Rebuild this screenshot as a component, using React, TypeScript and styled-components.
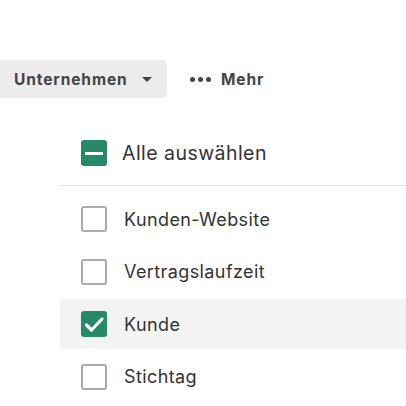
import React from "react";
import styled, { createGlobalStyle } from "styled-components";

const Global = createGlobalStyle`
  html, body { margin: 0; padding: 0; background: #fff; }
  body { font-family: Inter, "Noto Sans", sans-serif; color: #333; }
`;

const Page = styled.div`
  width: 406px;
  height: 406px;
  overflow: hidden;
  padding-top: 60px;
  box-sizing: border-box;
`;

const Toolbar = styled.div`
  display: flex;
  align-items: center;
  gap: 23px;
  height: 38px;
`;

const DropButton = styled.div`
  display: flex;
  align-items: center;
  gap: 14px;
  height: 38px;
  width: 167px;
  box-sizing: border-box;
  padding-left: 14px;
  background: #ececec;
  border-radius: 0 5px 5px 0;
  font-weight: 700;
  font-size: 15.5px;
  letter-spacing: 0.9px;
  color: #444;
`;

const Caret = styled.span`
  width: 0;
  height: 0;
  border-left: 5px solid transparent;
  border-right: 5px solid transparent;
  border-top: 5px solid #444;
`;

const MoreButton = styled.div`
  display: flex;
  align-items: center;
  gap: 10px;
  font-weight: 700;
  font-size: 15.5px;
  letter-spacing: 0.9px;
  color: #444;
`;

const Dots = styled.span`
  display: flex;
  gap: 3px;
  span {
    width: 5px;
    height: 5px;
    border-radius: 50%;
    background: #444;
  }
`;

const List = styled.div`
  margin-top: 30px;
  margin-left: 60px;
  display: flex;
  flex-direction: column;
`;

const AllRow = styled.div`
  display: flex;
  align-items: center;
  height: 50px;
  padding-left: 21px;
  gap: 15px;
  font-size: 19.5px;
  letter-spacing: 0.45px;
  color: #333;
  border-bottom: 1px solid #e2e2e2;
  margin-bottom: 8px;
  box-sizing: content-box;
  padding-bottom: 7px;
`;

const Rows = styled.div`
  display: flex;
  flex-direction: column;
  gap: 2.5px;
`;

const Row = styled.div<{ $active?: boolean }>`
  display: flex;
  align-items: center;
  height: 50px;
  padding-left: 21px;
  gap: 17px;
  font-size: 18px;
  letter-spacing: 0.4px;
  color: #333;
  background: ${(p) => (p.$active ? "#f3f3f3" : "transparent")};
`;

const Box = styled.span<{ $on?: boolean }>`
  width: 26px;
  height: 26px;
  flex: none;
  box-sizing: border-box;
  border-radius: 3px;
  display: flex;
  align-items: center;
  justify-content: center;
  background: ${(p) => (p.$on ? "#268a68" : "#fff")};
  border: ${(p) => (p.$on ? "none" : "2px solid #aaa")};
`;

const Dash = styled.span`
  width: 18px;
  height: 3px;
  background: #fff;
`;

const Check = () => (
  <svg width="26" height="26" viewBox="0 0 26 26">
    <path d="M5.5 14 L10.5 19 L21 8" fill="none" stroke="#fff" strokeWidth="3.2" strokeLinecap="round" strokeLinejoin="round" />
  </svg>
);

const items = [
  { label: "Kunden-Website", on: false },
  { label: "Vertragslaufzeit", on: false },
  { label: "Kunde", on: true },
  { label: "Stichtag", on: false },
];

export default function App() {
  return (
    <Page>
      <Global />
      <Toolbar>
        <DropButton>
          Unternehmen <Caret />
        </DropButton>
        <MoreButton>
          <Dots>
            <span />
            <span />
            <span />
          </Dots>
          Mehr
        </MoreButton>
      </Toolbar>
      <List>
        <AllRow>
          <Box $on>
            <Dash />
          </Box>
          Alle auswählen
        </AllRow>
        <Rows>
          {items.map((it) => (
            <Row key={it.label} $active={it.on}>
              <Box $on={it.on}>{it.on && <Check />}</Box>
              {it.label}
            </Row>
          ))}
        </Rows>
      </List>
    </Page>
  );
}
